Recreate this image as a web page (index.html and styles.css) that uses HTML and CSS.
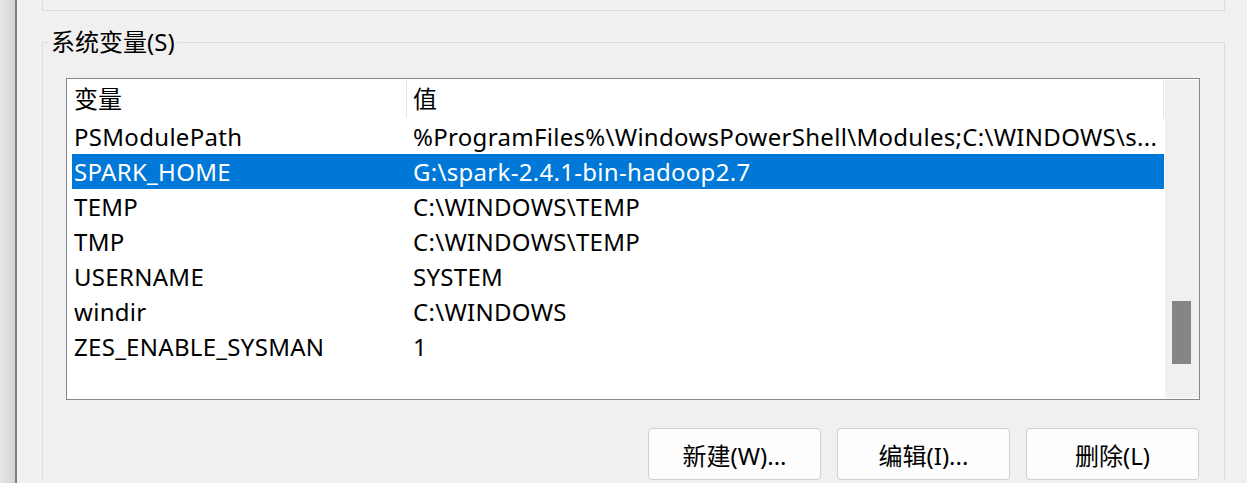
FILE: index.html
```html
<!DOCTYPE html>
<html lang="zh-CN">
<head>
<meta charset="utf-8">
<title>环境变量</title>
<link rel="stylesheet" href="styles.css">
</head>
<body>
<div class="page">
  <div class="edge"></div>
  <div class="main">
    <div class="group-top"></div>
    <fieldset class="group">
      <legend class="group-label">系统变量(S)</legend>
      <div class="group-body">
        <div class="listbox">
          <div class="list-area">
            <div class="list-header">
              <div class="hcell hcell-name">变量</div>
              <div class="hcell hcell-value">值</div>
            </div>
            <div class="row">
              <div class="cell cell-name">PSModulePath</div>
              <div class="cell cell-value">%ProgramFiles%\WindowsPowerShell\Modules;C:\WINDOWS\s...</div>
            </div>
            <div class="row selected">
              <div class="cell cell-name">SPARK_HOME</div>
              <div class="cell cell-value">G:\spark-2.4.1-bin-hadoop2.7</div>
            </div>
            <div class="row">
              <div class="cell cell-name">TEMP</div>
              <div class="cell cell-value">C:\WINDOWS\TEMP</div>
            </div>
            <div class="row">
              <div class="cell cell-name">TMP</div>
              <div class="cell cell-value">C:\WINDOWS\TEMP</div>
            </div>
            <div class="row">
              <div class="cell cell-name">USERNAME</div>
              <div class="cell cell-value">SYSTEM</div>
            </div>
            <div class="row">
              <div class="cell cell-name">windir</div>
              <div class="cell cell-value">C:\WINDOWS</div>
            </div>
            <div class="row">
              <div class="cell cell-name">ZES_ENABLE_SYSMAN</div>
              <div class="cell cell-value">1</div>
            </div>
          </div>
          <div class="scrollbar">
            <div class="thumb"></div>
          </div>
        </div>
        <div class="buttons">
          <button class="btn">新建(W)...</button>
          <button class="btn">编辑(I)...</button>
          <button class="btn">删除(L)</button>
        </div>
      </div>
    </fieldset>
  </div>
</div>
</body>
</html>
```

FILE: styles.css
```css
* { box-sizing: border-box; }

html, body {
  margin: 0;
  padding: 0;
  background: #f0f0f0;
  overflow: hidden;
}

body {
  font-family: "Noto Sans", "Noto Sans CJK SC", sans-serif;
  font-size: 24px;
  color: #000;
}

.page {
  display: flex;
  height: 483px;
}

.edge {
  width: 17px;
  flex: none;
  background: linear-gradient(to right, #e6e6e6, #d3d3d3);
  border-right: 2px solid #7e7e7e;
}

.main {
  padding-left: 25px;
  width: 1208px;
}

.group-top {
  height: 11px;
  border: 1px solid #dcdcdc;
  border-top: none;
  width: 1183px;
}

.group {
  margin: 16px 0 0 0;
  padding: 0;
  width: 1183px;
  border: 1px solid #dcdcdc;
  border-bottom: none;
  min-width: 0;
}

.group-label {
  margin-left: 6px;
  padding: 0 2px;
  line-height: 30px;
  font-size: 24px;
}

.group-body {
  padding: 21px 24px 0 23px;
}

.listbox {
  width: 1134px;
  height: 322px;
  border: 1px solid #828790;
  background: #fff;
  display: flex;
}

.list-area {
  width: 1098px;
  flex: none;
}

.list-header {
  display: flex;
  height: 40px;
  padding-top: 1px;
}

.hcell {
  line-height: 38px;
  height: 38px;
  white-space: nowrap;
}

.hcell-name {
  width: 340px;
  padding-left: 7px;
  border-right: 1px solid #e5e5e5;
}

.hcell-value {
  width: 757px;
  padding-left: 6px;
  border-right: 1px solid #e5e5e5;
}

.row {
  display: flex;
  margin-left: 5px;
  width: 1092px;
  height: 35px;
  line-height: 35px;
  white-space: nowrap;
  letter-spacing: 0.3px;
}

.row.selected {
  background: #0078d7;
  color: #fff;
}

.cell-name {
  width: 334px;
  padding-left: 2px;
  flex: none;
}

.cell-value {
  flex: 1;
  padding-left: 7px;
  overflow: hidden;
}

.scrollbar {
  width: 34px;
  margin: 1px 0 1px 0;
  background: #f0f0f0;
  padding: 221px 0 0 7px;
}

.thumb {
  width: 19px;
  height: 63px;
  background: #858585;
}

.buttons {
  display: flex;
  justify-content: flex-end;
  gap: 16px;
  margin-top: 28px;
  padding-right: 1px;
}

.btn {
  width: 173px;
  height: 52px;
  border: 1px solid #cfcfcf;
  border-radius: 4px;
  background: #fdfdfd;
  font-family: "Noto Sans", "Noto Sans CJK SC", sans-serif;
  font-size: 24px;
  color: #000;
  padding: 0;
}
```
